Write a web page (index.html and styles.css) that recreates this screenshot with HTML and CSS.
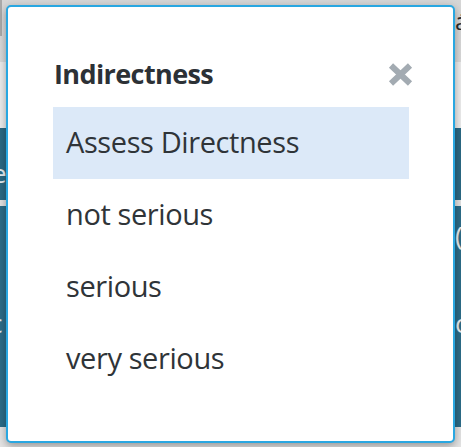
FILE: index.html
```html
<!DOCTYPE html>
<html>
<head>
<meta charset="utf-8">
<link rel="stylesheet" href="styles.css">
</head>
<body>
<div class="page">
  <div class="band band-top"><span class="edge-left"></span><span class="glyph-tr">á</span></div>
  <div class="band band-sub"></div>
  <div class="band band-teal"><span class="frag frag-l">e</span></div>
  <div class="band band-stripe"></div>
  <div class="band band-teal2"><span class="frag frag-r1">(</span><span class="frag frag-l2">c</span><span class="frag frag-r2">o</span></div>
  <div class="band band-bottom"></div>
</div>
<div class="dialog">
  <div class="header">
    <h2 class="title">Indirectness</h2>
    <button class="close" aria-label="Close">
      <svg width="25" height="23" viewBox="0 0 25 23"><path d="M3 2.5 L22 20.5 M22 2.5 L3 20.5" stroke="#a3abb2" stroke-width="6" stroke-linecap="butt"/></svg>
    </button>
  </div>
  <ul class="options">
    <li class="option active">Assess Directness</li>
    <li class="option">not serious</li>
    <li class="option">serious</li>
    <li class="option">very serious</li>
  </ul>
</div>
</body>
</html>
```

FILE: styles.css
```css
html, body {
  margin: 0;
  padding: 0;
}
body {
  width: 461px;
  height: 447px;
  overflow: hidden;
  position: relative;
  font-family: "Open Sans", "Noto Sans", sans-serif;
  background: #e3e3e3;
}
.page {
  display: flex;
  flex-direction: column;
  height: 447px;
}
.band {
  position: relative;
  overflow: hidden;
  flex: none;
}
.band-top {
  height: 62px;
  background: linear-gradient(#d6d6d6, #dadada);
}
.edge-left {
  position: absolute;
  left: 0;
  top: 0;
  width: 2px;
  height: 36px;
  background: #a9a9a9;
}
.glyph-tr {
  position: absolute;
  left: 455px;
  top: 4px;
  font-size: 24px;
  color: #2b2b2b;
}
.band-sub {
  height: 66px;
  background: #ededed;
}
.band-teal {
  height: 72px;
  background: #2b6984;
}
.band-stripe {
  height: 6px;
  background: #e2e2e2;
}
.band-teal2 {
  height: 221px;
  background: #2c6c88;
}
.band-bottom {
  flex: 1;
  background: #e4e4e4;
}
.frag {
  position: absolute;
  color: #e8eef2;
  font-size: 26px;
  line-height: 1;
}
.frag-l { left: -8px; top: 32px; }
.frag-r1 { left: 455px; top: 16px; }
.frag-l2 { left: -10px; top: 104px; }
.frag-r2 { left: 455px; top: 104px; }

.dialog {
  position: absolute;
  left: 6px;
  top: 5px;
  width: 449px;
  height: 438px;
  box-sizing: border-box;
  border: 2px solid #29a7e1;
  border-radius: 5px;
  background: #ffffff;
  box-shadow: 0 3px 8px rgba(0, 0, 0, 0.35);
  padding: 49px 44px 0 45px;
}
.header {
  display: flex;
  align-items: center;
  justify-content: space-between;
  margin-right: -4px;
  margin-bottom: 15px;
}
.title {
  margin: 0 0 0 1px;
  font-size: 27px;
  font-weight: 700;
  letter-spacing: -0.6px;
  color: #2c3136;
  line-height: 36px;
}
.close {
  border: 0;
  background: none;
  padding: 0;
  width: 25px;
  height: 23px;
  display: flex;
}
.options {
  list-style: none;
  margin: 0;
  padding: 0;
}
.option {
  height: 72px;
  line-height: 70px;
  padding-left: 13px;
  font-size: 29px;
  letter-spacing: -0.4px;
  color: #2f3438;
}
.option.active {
  background: #dce9f8;
}
```
